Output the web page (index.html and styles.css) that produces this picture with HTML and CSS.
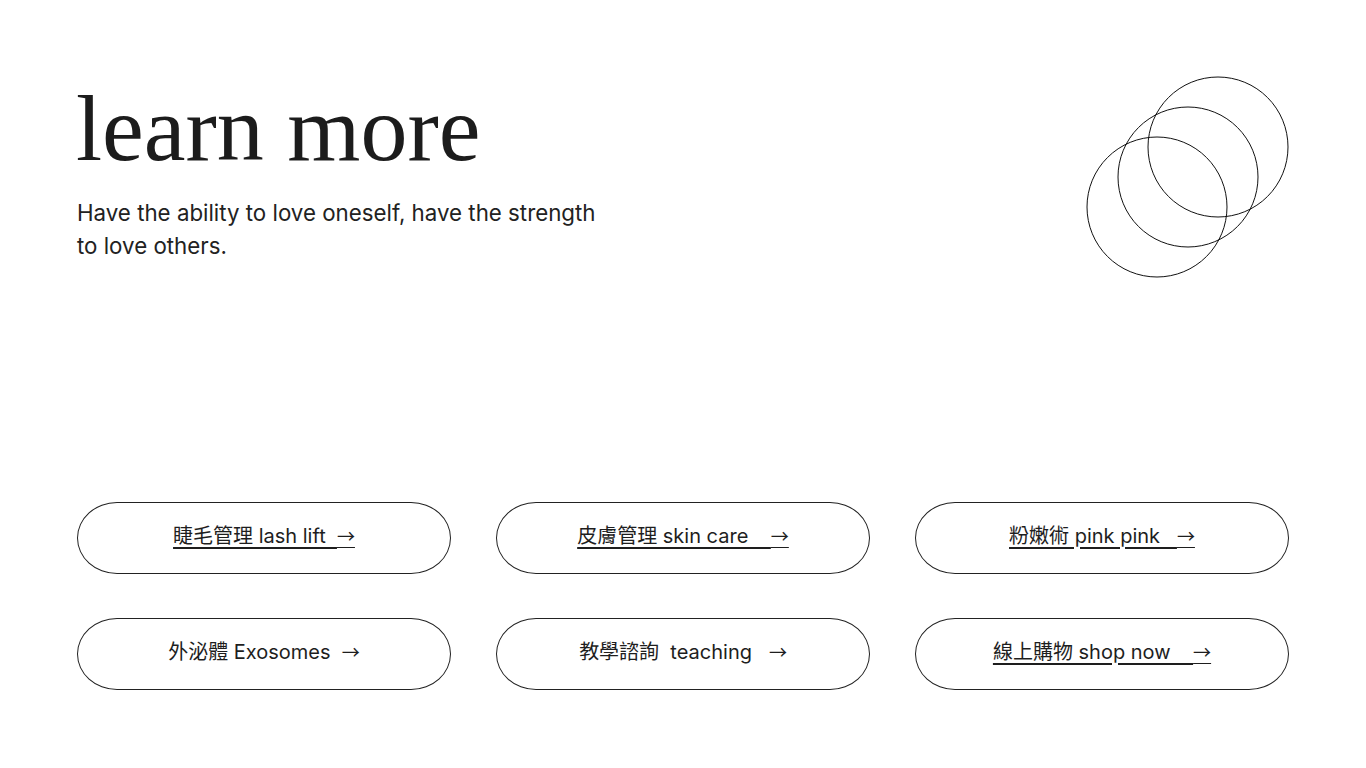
FILE: index.html
```html
<!DOCTYPE html>
<html lang="zh-Hant">
<head>
  <meta charset="UTF-8" />
  <meta name="viewport" content="width=device-width, initial-scale=1.0" />
  <title>learn more</title>
  <link rel="stylesheet" href="styles.css">
</head>
<body>
  <div class="page">
    <div class="intro">
      <div class="intro-text">
        <h1>learn more</h1>
        <p>Have the ability to love oneself, have the strength to love others.</p>
      </div>

      <!-- three rings -->
      <svg class="rings" width="204" height="204" viewBox="0 0 204 204">
        <circle cx="132" cy="71" r="70" />
        <circle cx="102" cy="101" r="70" />
        <circle cx="71" cy="131" r="70" />
      </svg>
    </div>

    <div class="links">
      <a class="pill linked" href="#">睫毛管理 lash lift&nbsp;&nbsp;<span class="arrow">→</span></a>
      <a class="pill linked" href="#">皮膚管理 skin care&nbsp;&nbsp;&nbsp;&nbsp;<span class="arrow">→</span></a>
      <a class="pill linked" href="#">粉嫩術 pink pink&nbsp;&nbsp;&nbsp;<span class="arrow">→</span></a>
      <a class="pill" href="#">外泌體 Exosomes&nbsp;&nbsp;<span class="arrow">→</span></a>
      <a class="pill" href="#">教學諮詢&nbsp;&nbsp;teaching&nbsp;&nbsp;&nbsp;<span class="arrow">→</span></a>
      <a class="pill linked" href="#">線上購物 shop now&nbsp;&nbsp;&nbsp;&nbsp;<span class="arrow">→</span></a>
    </div>
  </div>
</body>
</html>
```

FILE: styles.css
```css
* {
  margin: 0;
  padding: 0;
  box-sizing: border-box;
}

body {
  background: #ffffff;
  color: #1e1e1e;
  font-family: Inter, "Noto Sans CJK TC", sans-serif;
}

.page {
  padding: 0 77px;
}

.intro {
  display: flex;
  justify-content: space-between;
  align-items: flex-start;
  padding-top: 76px;
}

.intro-text {
  width: 530px;
}

h1 {
  font-family: "Liberation Serif", "Noto Sans CJK TC", serif;
  font-weight: 400;
  font-size: 94px;
  line-height: 1;
  color: #1c1c1c;
  margin-top: 5px;
  margin-left: -1px;
}

.intro-text p {
  margin-top: 21px;
  font-size: 22.3px;
  line-height: 33px;
  color: #222;
}

.rings {
  display: block;
  margin-right: -1px;
}

.rings circle {
  fill: none;
  stroke: #111;
  stroke-width: 1;
}

.links {
  display: grid;
  grid-template-columns: repeat(3, 1fr);
  column-gap: 45px;
  row-gap: 44px;
  margin-top: 222px;
}

.pill {
  display: flex;
  align-items: center;
  justify-content: center;
  height: 72px;
  padding-bottom: 5px;
  border: 1px solid #222;
  border-radius: 40px / 36px;
  font-size: 20px;
  line-height: 1.2;
  color: #1e1e1e;
  text-decoration: none;
  white-space: pre;
}

.pill.linked {
  text-decoration: underline;
  text-underline-offset: 4px;
}

.arrow {
  font-family: "Noto Sans CJK TC", sans-serif;
  font-size: 18px;
}
```
